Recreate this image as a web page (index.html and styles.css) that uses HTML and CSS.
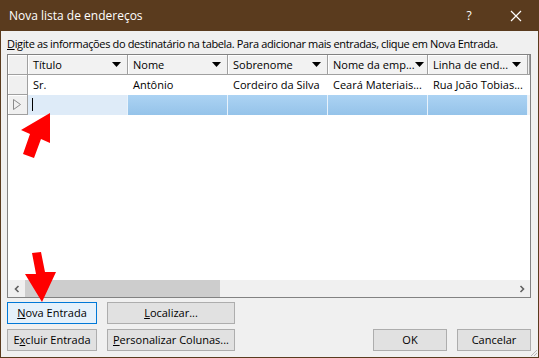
FILE: index.html
```html
<!DOCTYPE html>
<html lang="pt">
<head>
<meta charset="utf-8">
<title>Nova lista de endereços</title>
<link rel="stylesheet" href="styles.css">
</head>
<body>
<div class="window">
  <div class="titlebar">
    <span class="title">Nova lista de endereços</span>
    <span class="help">?</span>
    <span class="close"><svg width="12" height="12" viewBox="0 0 12 12"><path d="M1 1L11 11M11 1L1 11" stroke="#fff" stroke-width="1.2"/></svg></span>
  </div>
  <div class="body">
    <p class="hint"><u>D</u>igite as informações do destinatário na tabela. Para adicionar mais entradas, clique em Nova Entrada.</p>
    <div class="grid">
      <div class="row head">
        <div class="rh"></div>
        <div class="hc"><span>Título</span><svg class="dd" width="9" height="5" viewBox="0 0 9 5"><path d="M0 0H9L4.5 5Z" fill="#000"/></svg></div>
        <div class="hc"><span>Nome</span><svg class="dd" width="9" height="5" viewBox="0 0 9 5"><path d="M0 0H9L4.5 5Z" fill="#000"/></svg></div>
        <div class="hc"><span>Sobrenome</span><svg class="dd" width="9" height="5" viewBox="0 0 9 5"><path d="M0 0H9L4.5 5Z" fill="#000"/></svg></div>
        <div class="hc"><span>Nome da emp...</span><svg class="dd" width="9" height="5" viewBox="0 0 9 5"><path d="M0 0H9L4.5 5Z" fill="#000"/></svg></div>
        <div class="hc"><span>Linha de end...</span><svg class="dd" width="9" height="5" viewBox="0 0 9 5"><path d="M0 0H9L4.5 5Z" fill="#000"/></svg></div>
        <div class="fill"></div>
      </div>
      <div class="row">
        <div class="rh"></div>
        <div class="c">Sr.</div>
        <div class="c">Antônio</div>
        <div class="c">Cordeiro da Silva</div>
        <div class="c">Ceará Materiais...</div>
        <div class="c">Rua João Tobias...</div>
        <div class="fill"></div>
      </div>
      <div class="row sel">
        <div class="rh"><svg width="10" height="13" viewBox="0 0 10 13"><path d="M1.5 1.5L8.5 6.5L1.5 11.5Z" fill="none" stroke="#8a8a8a" stroke-width="1"/></svg></div>
        <div class="c cur"><span class="caret"></span></div>
        <div class="c"></div>
        <div class="c"></div>
        <div class="c"></div>
        <div class="c"></div>
        <div class="fill"></div>
      </div>
      <div class="empty"></div>
      <div class="hscroll">
        <div class="sbtn"><svg width="8" height="8" viewBox="0 0 8 8"><path d="M5.5 1L2.5 4L5.5 7" fill="none" stroke="#606060" stroke-width="1.6"/></svg></div>
        <div class="track"><div class="thumb"></div></div>
        <div class="sbtn"><svg width="8" height="8" viewBox="0 0 8 8"><path d="M2.5 1L5.5 4L2.5 7" fill="none" stroke="#606060" stroke-width="1.6"/></svg></div>
      </div>
    </div>
    <div class="buttons">
      <button class="btn focus b-new"><u>N</u>ova Entrada</button>
      <button class="btn b-find"><u>L</u>ocalizar...</button>
      <button class="btn b-del">E<u>x</u>cluir Entrada</button>
      <button class="btn b-cols"><u>P</u>ersonalizar Colunas...</button>
      <button class="btn b-ok">OK</button>
      <button class="btn b-cancel">Cancelar</button>
    </div>
  </div>
  <svg class="arrow" width="539" height="358" viewBox="0 0 539 358"><path d="M50 113L50 143L41 139L34 158L23 154L30 134L21 130Z" fill="#f00"/></svg>
  <svg class="arrow" width="539" height="358" viewBox="0 0 539 358"><path d="M32 253L41 252L45 272L56 272L42 302L25 274L36 274Z" fill="#f00"/></svg>
  <svg class="grip" width="10" height="10" viewBox="0 0 10 10"><path d="M9 3L3 9M9 6L6 9" stroke="#b8b8b8" stroke-width="1"/></svg>
</div>
</body>
</html>
```
FILE: styles.css
```css
* { box-sizing: border-box; }
html, body { margin: 0; padding: 0; }
body { width: 539px; height: 358px; overflow: hidden; font-family: "Open Sans", "Noto Sans", sans-serif; font-size: 11px; color: #000; }

.window {
  position: relative;
  width: 539px; height: 358px;
  display: flex; flex-direction: column;
  background: #f0f0f0;
  border: 1px solid #5a3b1e;
  border-top: none;
}

.titlebar {
  height: 31px; flex: none;
  background: #5a3b1e;
  color: #fff;
  display: flex; align-items: center;
  padding-left: 9px;
  margin: 0 -1px;
  padding-right: 12px;
}
.title { font-size: 12px; flex: 1; }
.help { font-size: 12px; width: 46px; text-align: center; margin-right: 13px; }
.close { display: flex; width: 22px; justify-content: center; }

.body { flex: 1; display: flex; flex-direction: column; padding: 5px 7px 7px 6px; }
.hint { margin: 0 0 1px 0; line-height: 16px; height: 17px; white-space: nowrap; letter-spacing: -0.36px; }

.grid {
  height: 244px; flex: none;
  border: 1px solid #828282;
  background: #fff;
  display: flex; flex-direction: column;
}
.row { display: grid; grid-template-columns: 20px repeat(5, 100px) 1fr; height: 20px; flex: none; }
.row > div { line-height: 19px; white-space: nowrap; overflow: hidden; }
.rh { background: #f0f0f0; border-right: 1px solid #a0a0a0; border-bottom: 1px solid #a0a0a0; box-shadow: inset 1px 1px #fff; display: flex; align-items: center; padding-left: 4px; }
.hc { background: #f2f2f2; border-right: 1px solid #a0a0a0; border-bottom: 1px solid #a0a0a0; box-shadow: inset 1px 1px #fff; display: flex; align-items: center; justify-content: space-between; padding: 0 6px 0 5px; }
.hc .dd { flex: none; }
.head .fill { background: #f0f0f0; border-right: 1px solid #a0a0a0; border-bottom: 1px solid #a0a0a0; }
.fill { background: #fff; }
.c { padding-left: 5px; }
.sel .c { background: linear-gradient(#acd3f3, #95c3e9); border-right: 1px solid #e8f2fb; }
.sel .c.cur { background: #deebf8; position: relative; }
.sel .fill { background: #f3f3f3; }
.caret { display: block; width: 1px; height: 13px; background: #000; margin-top: 3px; margin-left: -1px; }

.empty { flex: 1; background: #fff; }
.hscroll { height: 17px; flex: none; display: flex; background: #f0f0f0; }
.sbtn { width: 17px; display: flex; align-items: center; justify-content: center; }
.track { flex: 1; }
.thumb { width: 195px; height: 100%; background: #cdcdcd; }

.buttons {
  margin-top: 4px;
  display: grid;
  grid-template-columns: 90px 128px 1fr 74px 74px;
  grid-template-rows: 22px 22px;
  column-gap: 10px; row-gap: 5px;
}
.btn {
  font-family: inherit; font-size: 11px; color: #000;
  background: #e1e1e1; border: 1px solid #adadad; padding: 0; margin: 0;
  line-height: 18px;
}
.btn.focus { background: #e5f1fb; border-color: #0078d7; }
.b-new { grid-column: 1; grid-row: 1; }
.b-find { grid-column: 2; grid-row: 1; }
.b-del { grid-column: 1; grid-row: 2; }
.b-cols { grid-column: 2; grid-row: 2; }
.b-ok { grid-column: 4; grid-row: 2; }
.b-cancel { grid-column: 5; grid-row: 2; }

.arrow { position: absolute; left: -1px; top: 0; pointer-events: none; }
.grip { position: absolute; right: 0; bottom: 0; }
```
